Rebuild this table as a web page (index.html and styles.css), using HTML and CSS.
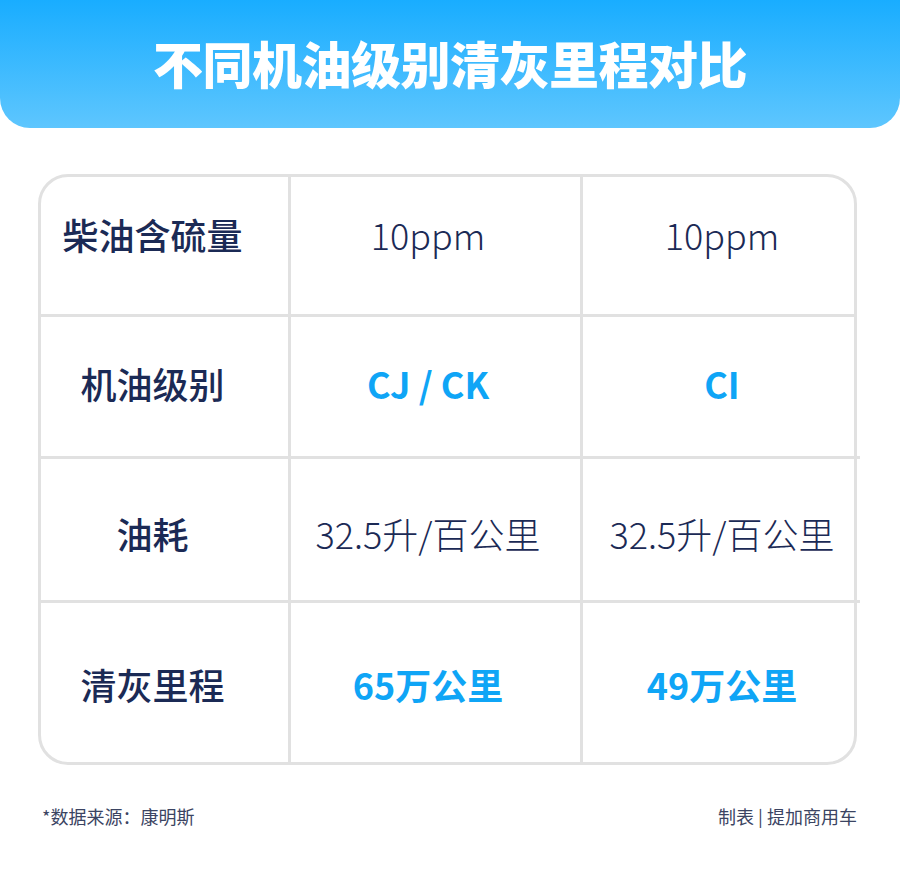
FILE: index.html
```html
<!DOCTYPE html>
<html lang="zh-CN">
<head>
<meta charset="utf-8">
<title>不同机油级别清灰里程对比</title>
<link rel="stylesheet" href="styles.css">
</head>
<body>
<header class="banner">
  <h1 class="title">不同机油级别清灰里程对比</h1>
</header>
<main class="table">
  <div class="row row-1">
    <div class="cell label">柴油含硫量</div>
    <div class="cell val-a">10ppm</div>
    <div class="cell val-b">10ppm</div>
  </div>
  <div class="row row-2 over">
    <div class="cell label">机油级别</div>
    <div class="cell val-a hl">CJ / CK</div>
    <div class="cell val-b hl">CI</div>
  </div>
  <div class="row row-3 over">
    <div class="cell label">油耗</div>
    <div class="cell val-a">32.5升/百公里</div>
    <div class="cell val-b">32.5升/百公里</div>
  </div>
  <div class="row row-4">
    <div class="cell label">清灰里程</div>
    <div class="cell val-a hl">65万公里</div>
    <div class="cell val-b hl">49万公里</div>
  </div>
</main>
<footer class="foot">
  <span>*数据来源：康明斯</span>
  <span>制表 | 提加商用车</span>
</footer>
</body>
</html>
```

FILE: styles.css
```css
* { box-sizing: border-box; }
html, body { margin: 0; padding: 0; background: #ffffff; }
body {
  width: 900px;
  font-family: "Noto Sans CJK SC", "Noto Sans", sans-serif;
  color: #1b2a55;
}
.banner {
  height: 128px;
  background: linear-gradient(180deg, #19adff 0%, #5ec6fe 100%);
  border-radius: 0 0 30px 30px;
  display: flex;
  align-items: center;
  justify-content: center;
  padding-bottom: 4px;
}
.title {
  margin: 0;
  color: #ffffff;
  font-size: 50px;
  font-weight: 900;
  line-height: 1;
  letter-spacing: -0.5px;
}
.table {
  margin: 46px 0 0 38px;
  width: 819px;
  border: 3px solid #e1e1e1;
  border-radius: 30px;
}
.row {
  display: grid;
  grid-template-columns: 250px 292px 271px;
  width: 813px;
}
.row.over { width: 819px; }
.row-1, .row-2, .row-3 { border-bottom: 3px solid #e1e1e1; }
.row-1 { height: 140px; }
.row-2 { height: 142px; }
.row-3 { height: 144px; }
.row-4 { height: 159px; }
.cell {
  display: flex;
  align-items: center;
  justify-content: center;
  font-size: 36px;
  line-height: 1;
  white-space: nowrap;
  padding-bottom: 8px;
}
.label, .val-a { border-right: 3px solid #e1e1e1; }
.label { font-weight: 500; padding-right: 24px; }
.val-a { font-weight: 300; padding-right: 15px; }
.val-b { font-weight: 300; padding-left: 7px; }
.hl { color: #0fa5f6; font-weight: 700; }
.row-1 .cell { padding-bottom: 24px; }
.row-3 .cell { padding-top: 14px; }
.row-4 .cell { padding-top: 10px; }
.foot {
  display: flex;
  justify-content: space-between;
  margin: 39px 43px 0 42px;
  font-size: 18px;
  line-height: 24px;
  color: #3b4462;
}
```
